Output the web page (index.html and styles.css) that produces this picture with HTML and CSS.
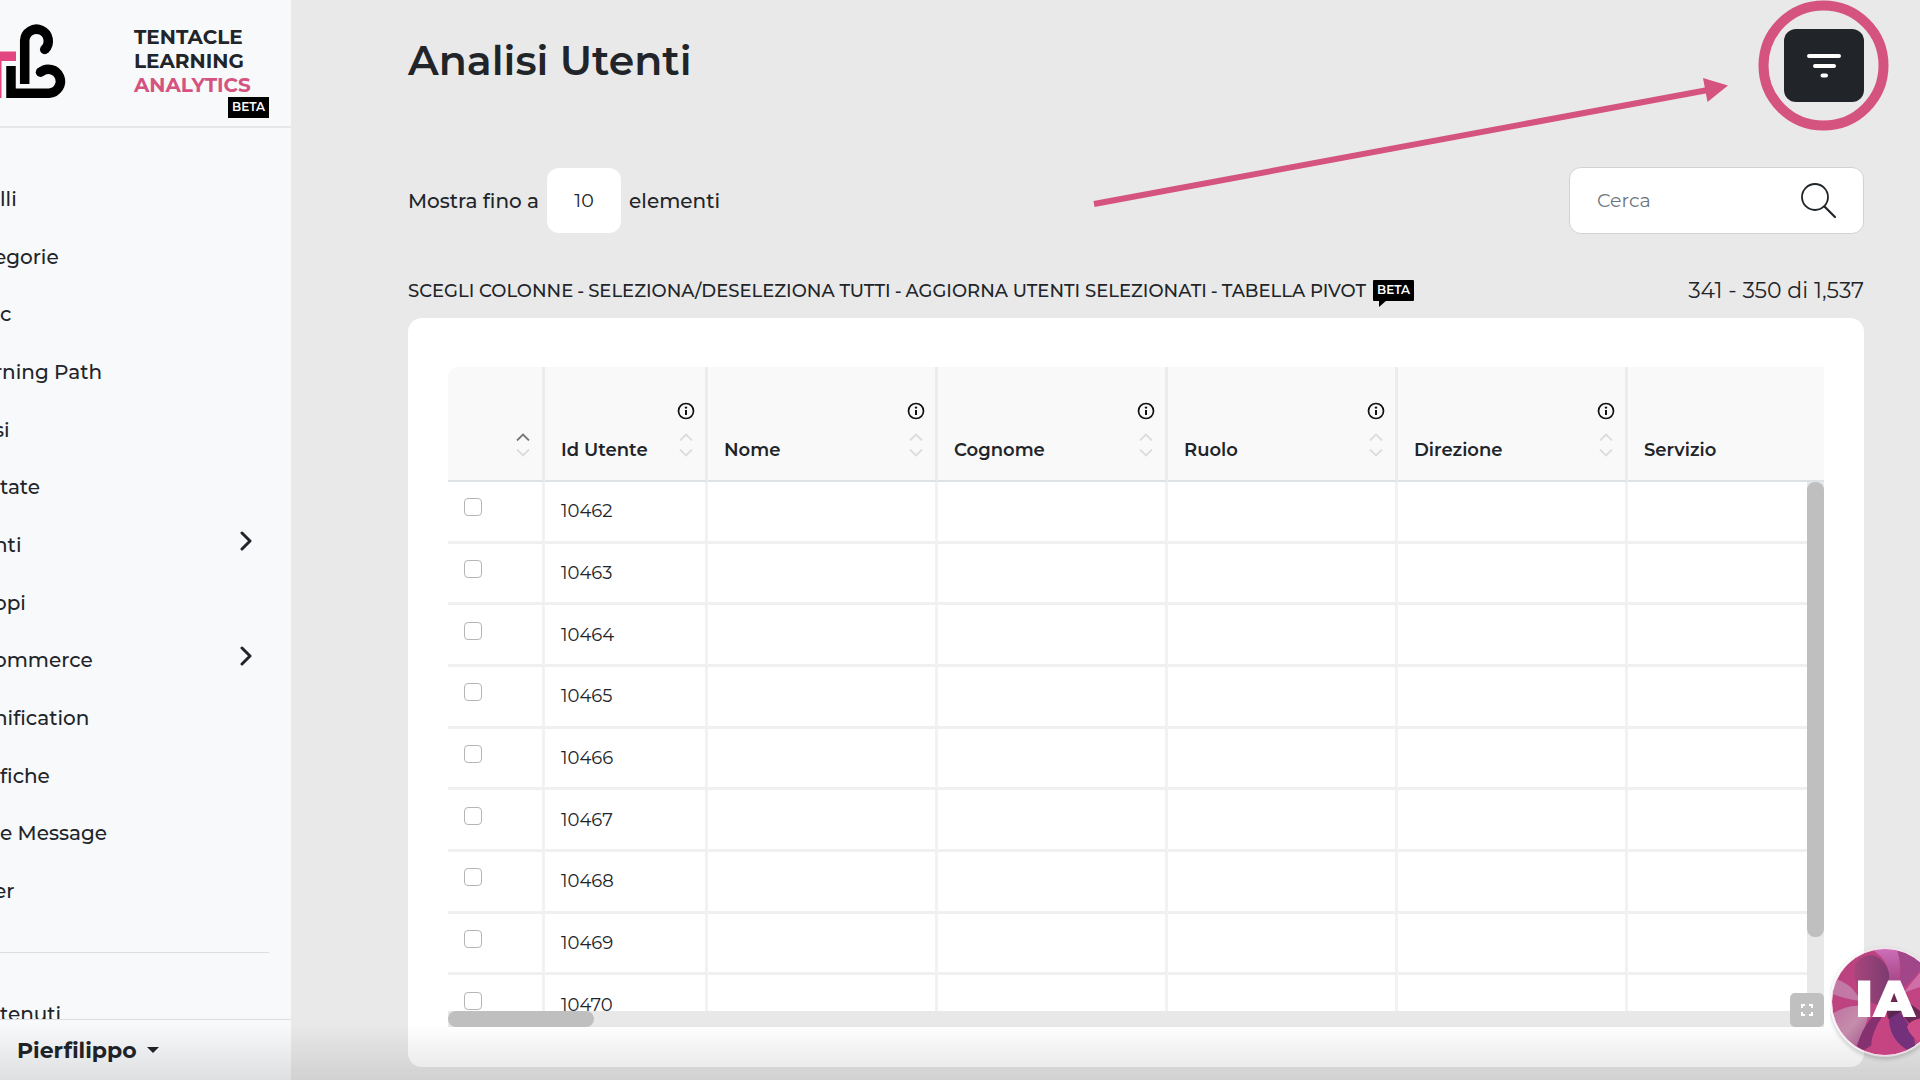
FILE: index.html
```html
<!DOCTYPE html>
<html lang="it">
<head>
<meta charset="utf-8">
<title>Analisi Utenti</title>
<link rel="stylesheet" href="styles.css">
</head>
<body>
<svg class="defs" aria-hidden="true">
  <symbol id="info" viewBox="0 0 18 18"><circle cx="9" cy="9" r="7.5" fill="none" stroke="#111" stroke-width="1.7"/><path d="M9 8v5" stroke="#111" stroke-width="2"/><circle cx="9" cy="5.6" r="1.2" fill="#111"/></symbol>
  <symbol id="up" viewBox="0 0 14 8"><path d="M1 7.5L7 1.5l6 6" fill="none" stroke="currentColor" stroke-width="1.8"/></symbol>
  <symbol id="down" viewBox="0 0 14 8"><path d="M1 .5l6 6 6-6" fill="none" stroke="currentColor" stroke-width="1.8"/></symbol>
  <symbol id="chevron" viewBox="0 0 14 20"><path d="M2 2l8 8-8 8" fill="none" stroke="#212529" stroke-width="3" stroke-linecap="round" stroke-linejoin="round"/></symbol>
</svg>
<div class="app">
  <aside class="sidebar">
    <header class="brand">
      <svg class="logo" viewBox="0 0 68 100" aria-hidden="true">
        <path d="M0 51.500h16v9.500H1.500V98H0z" fill="#e2457f"/>
        <g fill="none" stroke="#000" stroke-width="9.500">
          <path d="M24.700 84V40.500a11.800 11.800 0 1 1 20 9"/>
          <path d="M11 66v27.200h38a12 12 0 1 0-8.500-21"/>
        </g>
        <circle cx="44.700" cy="49.500" r="4.750"/><circle cx="40.500" cy="72.200" r="4.750"/>
      </svg>
      <div class="brand-name">TENTACLE<br>LEARNING<br><span class="pink">ANALYTICS</span><span class="badge brand-badge">BETA</span></div>
    </header>
    <nav class="nav">
      <div class="nav-list">
        <a href="#">lli</a>
        <a class="tucked" href="#">egorie</a>
        <a href="#">c</a>
        <a class="tucked" href="#">rning Path</a>
        <a class="tucked" href="#">si</a>
        <a href="#">tate</a>
        <a class="tucked" href="#">nti<svg class="chevron"><use href="#chevron"/></svg></a>
        <a class="tucked" href="#">opi</a>
        <a class="tucked" href="#">ommerce<svg class="chevron"><use href="#chevron"/></svg></a>
        <a class="tucked" href="#">nification</a>
        <a href="#">fiche</a>
        <a href="#">e Message</a>
        <a class="tucked" href="#">er</a>
      </div>
      <hr>
      <div class="nav-more"><a href="#">tenuti</a></div>
    </nav>
    <footer class="account"><button type="button">Pierfilippo<span class="caret"></span></button></footer>
  </aside>

  <main class="main">
    <div class="title-row">
      <h1>Analisi Utenti</h1>
      <button class="filter" type="button" aria-label="Filtri"><svg viewBox="0 0 36 26"><path d="M3 3h30M9 13h19M16.500 22.500h3.500" stroke="#fff" stroke-width="4" stroke-linecap="round"/></svg></button>
    </div>
    <div class="tools">
      <div class="per-page"><label for="count">Mostra fino a</label><input id="count" type="text" value="10"><span>elementi</span></div>
      <div class="search">
        <input type="search" placeholder="Cerca" aria-label="Cerca">
        <svg viewBox="0 0 36 36" aria-hidden="true"><circle cx="14" cy="14" r="13" fill="none" stroke="#212529" stroke-width="1.800"/><path d="M23.500 23.500L34 34" stroke="#212529" stroke-width="2.200" stroke-linecap="round"/></svg>
      </div>
    </div>
    <div class="actions">
      <div class="links"><a href="#">SCEGLI COLONNE</a><span>-</span><a href="#">SELEZIONA/DESELEZIONA TUTTI</a><span>-</span><a href="#">AGGIORNA UTENTI SELEZIONATI</a><span>-</span><a href="#">TABELLA PIVOT</a><b class="badge bubble">BETA</b></div>
      <div class="range">341 - 350 di 1,537</div>
    </div>
    <section class="card">
      <div class="grid">
        <div class="viewport">
          <table>
            <colgroup><col class="c-check"><col class="c-id"><col class="c-text"><col class="c-text"><col class="c-text"><col class="c-text"><col></colgroup>
            <thead><tr>
              <th><div class="head"><span></span><div class="marks"><svg class="sort on"><use href="#up"/></svg><svg class="sort"><use href="#down"/></svg></div></div></th>
              <th><div class="head"><span>Id Utente</span><div class="marks"><svg class="info"><use href="#info"/></svg><svg class="sort"><use href="#up"/></svg><svg class="sort"><use href="#down"/></svg></div></div></th>
              <th><div class="head"><span>Nome</span><div class="marks"><svg class="info"><use href="#info"/></svg><svg class="sort"><use href="#up"/></svg><svg class="sort"><use href="#down"/></svg></div></div></th>
              <th><div class="head"><span>Cognome</span><div class="marks"><svg class="info"><use href="#info"/></svg><svg class="sort"><use href="#up"/></svg><svg class="sort"><use href="#down"/></svg></div></div></th>
              <th><div class="head"><span>Ruolo</span><div class="marks"><svg class="info"><use href="#info"/></svg><svg class="sort"><use href="#up"/></svg><svg class="sort"><use href="#down"/></svg></div></div></th>
              <th><div class="head"><span>Direzione</span><div class="marks"><svg class="info"><use href="#info"/></svg><svg class="sort"><use href="#up"/></svg><svg class="sort"><use href="#down"/></svg></div></div></th>
              <th><div class="head"><span>Servizio</span></div></th>
            </tr></thead>
            <tbody>
              <tr><td><input type="checkbox" aria-label="10462"></td><td>10462</td><td></td><td></td><td></td><td></td><td></td></tr>
              <tr><td><input type="checkbox" aria-label="10463"></td><td>10463</td><td></td><td></td><td></td><td></td><td></td></tr>
              <tr><td><input type="checkbox" aria-label="10464"></td><td>10464</td><td></td><td></td><td></td><td></td><td></td></tr>
              <tr><td><input type="checkbox" aria-label="10465"></td><td>10465</td><td></td><td></td><td></td><td></td><td></td></tr>
              <tr><td><input type="checkbox" aria-label="10466"></td><td>10466</td><td></td><td></td><td></td><td></td><td></td></tr>
              <tr><td><input type="checkbox" aria-label="10467"></td><td>10467</td><td></td><td></td><td></td><td></td><td></td></tr>
              <tr><td><input type="checkbox" aria-label="10468"></td><td>10468</td><td></td><td></td><td></td><td></td><td></td></tr>
              <tr><td><input type="checkbox" aria-label="10469"></td><td>10469</td><td></td><td></td><td></td><td></td><td></td></tr>
              <tr><td><input type="checkbox" aria-label="10470"></td><td>10470</td><td></td><td></td><td></td><td></td><td></td></tr>
            </tbody>
          </table>
        </div>
        <div class="track track-y"><div class="thumb"></div></div>
        <div class="track track-x"><div class="thumb"></div></div>
        <button class="expand" type="button" aria-label="Schermo intero"><svg viewBox="0 0 12 12"><path d="M1 4V1h3M8 1h3v3M11 8v3H8M4 11H1V8" fill="none" stroke="#fff" stroke-width="2"/></svg></button>
      </div>
    </section>
  </main>
</div>

<div class="fade"></div>

<svg class="callout" viewBox="0 0 860 220" aria-hidden="true">
  <path d="M34 204L648 90" stroke="#d5547f" stroke-width="6"/>
  <path d="M643 78l25 7.500-20.500 16.500z" fill="#d5547f"/>
  <circle cx="763.500" cy="65.500" r="60" fill="none" stroke="#d5547f" stroke-width="10"/>
</svg>

<div class="assistant-clip">
<button class="assistant" type="button">
  <svg viewBox="0 0 110 110" aria-hidden="true">
    <defs>
      <clipPath id="disc"><circle cx="55" cy="55" r="53"/></clipPath>
      <linearGradient id="base" x1="0" y1="0" x2="1" y2="1"><stop offset="0" stop-color="#b8427f"/><stop offset="1" stop-color="#c84584"/></linearGradient>
      <linearGradient id="petal" x1="0" y1="0" x2="1" y2="0"><stop offset="0" stop-color="#a8457c"/><stop offset="1" stop-color="#7b3c70"/></linearGradient>
      <linearGradient id="crest" x1="0" y1="0" x2="0" y2="1"><stop offset="0" stop-color="#cf70bd"/><stop offset="1" stop-color="#a0417f"/></linearGradient>
      <linearGradient id="mist" x1="0" y1="0" x2="1" y2="1"><stop offset="0" stop-color="#c0709f"/><stop offset=".5" stop-color="#c58dab"/><stop offset="1" stop-color="#9d4a84"/></linearGradient>
      <linearGradient id="root" x1="0" y1="0" x2="1" y2="1"><stop offset="0" stop-color="#4f2146"/><stop offset="1" stop-color="#8c2f66"/></linearGradient>
    </defs>
    <g clip-path="url(#disc)">
      <rect width="110" height="110" fill="url(#base)"/>
      <path d="M6 32Q24 38 30 54Q14 52 0 46z" fill="#c27aa4"/>
      <path d="M26 16C38 2 54 8 59 26C60 40 56 50 48 58C32 54 20 34 26 16z" fill="url(#petal)"/>
      <path d="M36 0C56 8 61 22 60 40L66 40C72 24 70 10 66 0z" fill="url(#crest)"/>
      <path d="M66 0C72 14 72 28 67 44C80 36 94 26 98 0z" fill="#a2468a"/>
      <path d="M98 14C88 30 78 38 74 46C88 40 100 36 110 38V14z" fill="#cf6ea8"/>
      <path d="M0 68C16 58 30 56 40 62C36 78 32 92 22 104L0 90z" fill="url(#mist)"/>
      <path d="M56 60C40 68 30 84 26 104C42 104 54 88 60 66z" fill="#85306f"/>
      <path d="M58 62C42 82 38 98 44 110H68C58 98 56 82 62 64z" fill="#c74483"/>
      <path d="M60 60C56 82 64 98 84 106C88 94 80 74 64 60z" fill="#74307a"/>
      <path d="M62 56C72 64 82 86 98 92C106 78 94 62 70 52z" fill="url(#root)"/>
      <path d="M77 80Q82 68 110 72V94Q84 100 77 80z" fill="#d04c88"/>
      <path d="M54 50L72 44L76 62L58 72z" fill="#552348" opacity=".8"/>
    </g>
    <circle cx="55" cy="55" r="53.500" fill="none" stroke="#f4dcea"/>
  </svg>
  <span>IA</span>
</button>
</div>
</body>
</html>
```
FILE: styles.css
```css
* { box-sizing: border-box; }

body {
  margin: 0;
  background: #e9e9e9;
  color: #212529;
  font-family: Montserrat, Inter, "Noto Sans", sans-serif;
  font-size: 20px;
  font-weight: 500;
  font-variant-ligatures: none;
  overflow: hidden;
}

a { color: inherit; text-decoration: none; }
button, input { font: inherit; color: inherit; }
button { border: 0; padding: 0; background: none; cursor: pointer; }
.defs { display: none; }

.app { display: flex; height: 100vh; }

/* Sidebar */
.sidebar {
  flex: none;
  width: 291px;
  display: flex;
  flex-direction: column;
  background: #f8f9fb;
  overflow: hidden;
}
.brand {
  display: flex;
  flex: none;
  gap: 66px;
  height: 128px;
  border-bottom: 2px solid #e6e7e9;
}
.logo { width: 68px; height: 100px; }
.brand-name {
  padding-top: 25px;
  font-size: 20px;
  font-weight: 700;
  line-height: 24px;
}
.pink { color: #d5547f; }
.badge {
  background: #000;
  color: #fff;
  font-size: 12px;
  font-weight: 600;
  text-align: center;
}
.brand-badge {
  display: block;
  width: 41px;
  height: 21px;
  margin-left: 94px;
  line-height: 20px;
}
.nav {
  flex: 1;
  display: flex;
  flex-direction: column;
  min-height: 0;
  padding: 42px 22px 0 0;
  overflow: hidden;
}
.nav-list { flex: 1; display: grid; grid-auto-rows: 1fr; }
.nav-list a {
  display: flex;
  align-items: center;
  justify-content: space-between;
}
.nav a { white-space: nowrap; }
.nav .tucked { margin-left: -6px; }
.chevron { width: 14px; height: 20px; margin: 0 15px 8px 0; }
.nav hr {
  width: 100%;
  margin: 32px 0 0;
  border: 0;
  border-top: 1px solid #dcdee1;
}
.nav-more { height: 66px; padding-top: 48px; line-height: 26px; overflow: hidden; }
.account {
  flex: none;
  height: 61px;
  padding-left: 17px;
  border-top: 1px solid #dcdee1;
}
.account button {
  display: flex;
  align-items: center;
  gap: 10px;
  height: 60px;
  font-size: 22px;
  font-weight: 700;
  font-variant-ligatures: normal;
}
.caret {
  border: 6px solid transparent;
  border-top-color: #212529;
  border-bottom: 0;
}

/* Content */
.main {
  flex: 1;
  min-width: 0;
  display: flex;
  flex-direction: column;
  padding: 29px 56px 13px 117px;
}
.title-row { display: flex; justify-content: space-between; height: 138px; }
h1 { margin: 0; font-size: 41px; line-height: 62px; font-weight: 600; }
.filter {
  display: flex;
  align-items: center;
  justify-content: center;
  width: 80px;
  height: 73px;
  border-radius: 12px;
  background: #212529;
}
.filter svg { width: 36px; height: 26px; }
.tools { display: flex; justify-content: space-between; align-items: center; }
.per-page { display: flex; align-items: center; gap: 8px; }
.per-page input {
  width: 74px;
  height: 65px;
  border: 0;
  border-radius: 12px;
  background: #fff;
  text-align: center;
  font-size: 19px;
  font-weight: 400;
}
.search {
  display: flex;
  align-items: center;
  width: 295px;
  height: 67px;
  padding: 0 26px 0 27px;
  border: 1px solid #d0d3d6;
  border-radius: 12px;
  background: #fff;
}
.search input {
  flex: 1;
  min-width: 0;
  padding: 0;
  border: 0;
  outline: 0;
  background: none;
  font-size: 19px;
  font-weight: 400;
}
.search input::placeholder { color: #6c757d; opacity: 1; }
.search svg { width: 36px; height: 36px; }
.actions {
  display: flex;
  align-items: center;
  justify-content: space-between;
  height: 84px;
  padding-top: 29px;
}
.links { display: flex; align-items: center; gap: 4px; font-size: 18px; line-height: 24px; white-space: nowrap; }
.range { font-size: 22px; font-weight: 400; }
.bubble {
  position: relative;
  width: 41px;
  height: 21px;
  margin-left: 3px;
  border-radius: 1px;
  font-size: 12px;
  line-height: 20px;
}
.bubble::after {
  content: "";
  position: absolute;
  left: 6px;
  top: 20px;
  border-top: 7px solid #000;
  border-right: 8px solid transparent;
}

/* Table */
.card {
  flex: 1;
  min-height: 0;
  display: flex;
  padding: 49px 40px 40px;
  border-radius: 14px;
  background: #fff;
}
.grid {
  position: relative;
  flex: 1;
  min-width: 0;
  display: grid;
  grid-template-columns: minmax(0, 1fr) 17px;
  grid-template-rows: 115px minmax(0, 1fr) 16px;
}
.viewport { grid-area: 1 / 1 / 3 / 3; overflow: hidden; border-radius: 10px 0 0 0; }
table {
  width: 100%;
  height: 670px;
  table-layout: fixed;
  border-collapse: separate;
  border-spacing: 0;
}
.c-check { width: 97px; }
.c-id { width: 163px; }
.c-text { width: 230px; }
thead tr { height: 115px; }
th, td { padding: 0 10px 0 16px; border-right: 3px solid #f2f2f2; text-align: left; }
th:last-child, td:last-child { border-right: 0; }
th {
  height: 115px;
  padding-bottom: 20px;
  vertical-align: bottom;
  background: #f9f9f9;
  border-right-color: #ececec;
  border-bottom: 2px solid #dfe2e4;
  font-size: 18px;
  font-weight: 600;
}
.head { display: flex; justify-content: space-between; align-items: flex-end; line-height: 20px; }
.marks { display: flex; flex-direction: column; align-items: center; gap: 8px; width: 18px; padding-bottom: 3px; }
.info { width: 18px; height: 18px; margin-bottom: 5px; }
.sort { width: 14px; height: 8px; color: #dcdcdc; }
.sort.on { color: #777; }
td { border-bottom: 3px solid #f0f0f0; font-size: 18px; font-weight: 400; line-height: 20px; }
td input {
  display: block;
  appearance: none;
  width: 18px;
  height: 18px;
  margin: 0 0 8px;
  border: 1px solid #b5b5b5;
  border-radius: 4px;
  background: #fff;
}
.track { background: #e8e8e8; }
.track-y { grid-area: 2 / 2; }
.track-x { grid-area: 3 / 1 / 4 / 3; }
.thumb { border-radius: 8px; background: #bfbfbf; }
.track-y .thumb { height: 86%; }
.track-x .thumb { width: 146px; height: 100%; }
.expand {
  position: absolute;
  right: 0;
  bottom: 0;
  display: flex;
  align-items: center;
  justify-content: center;
  width: 34px;
  height: 34px;
  border-radius: 5px;
  background: #c0c0c0;
}
.expand svg { width: 12px; height: 12px; }

/* Layers over the page */
.fade {
  position: fixed;
  inset: auto 0 0 0;
  height: 56px;
  background: linear-gradient(rgba(0, 0, 0, 0), rgba(0, 0, 0, .1));
  pointer-events: none;
}
.callout {
  position: absolute;
  top: 0;
  right: 0;
  width: 860px;
  height: 220px;
  pointer-events: none;
}
.assistant-clip {
  position: fixed;
  right: 0;
  bottom: 16px;
  width: 90px;
  height: 120px;
  padding-top: 3px;
  overflow: hidden;
}
.assistant {
  display: grid;
  place-items: center;
  width: 110px;
  height: 110px;
  border-radius: 50%;
  box-shadow: 0 2px 4px rgba(0, 0, 0, .2);
}
.assistant svg, .assistant span { grid-area: 1 / 1; }
.assistant svg { width: 110px; height: 110px; }
.assistant span { padding-bottom: 6px; color: #fff; font-size: 52px; font-weight: 900; line-height: 60px; }
```
